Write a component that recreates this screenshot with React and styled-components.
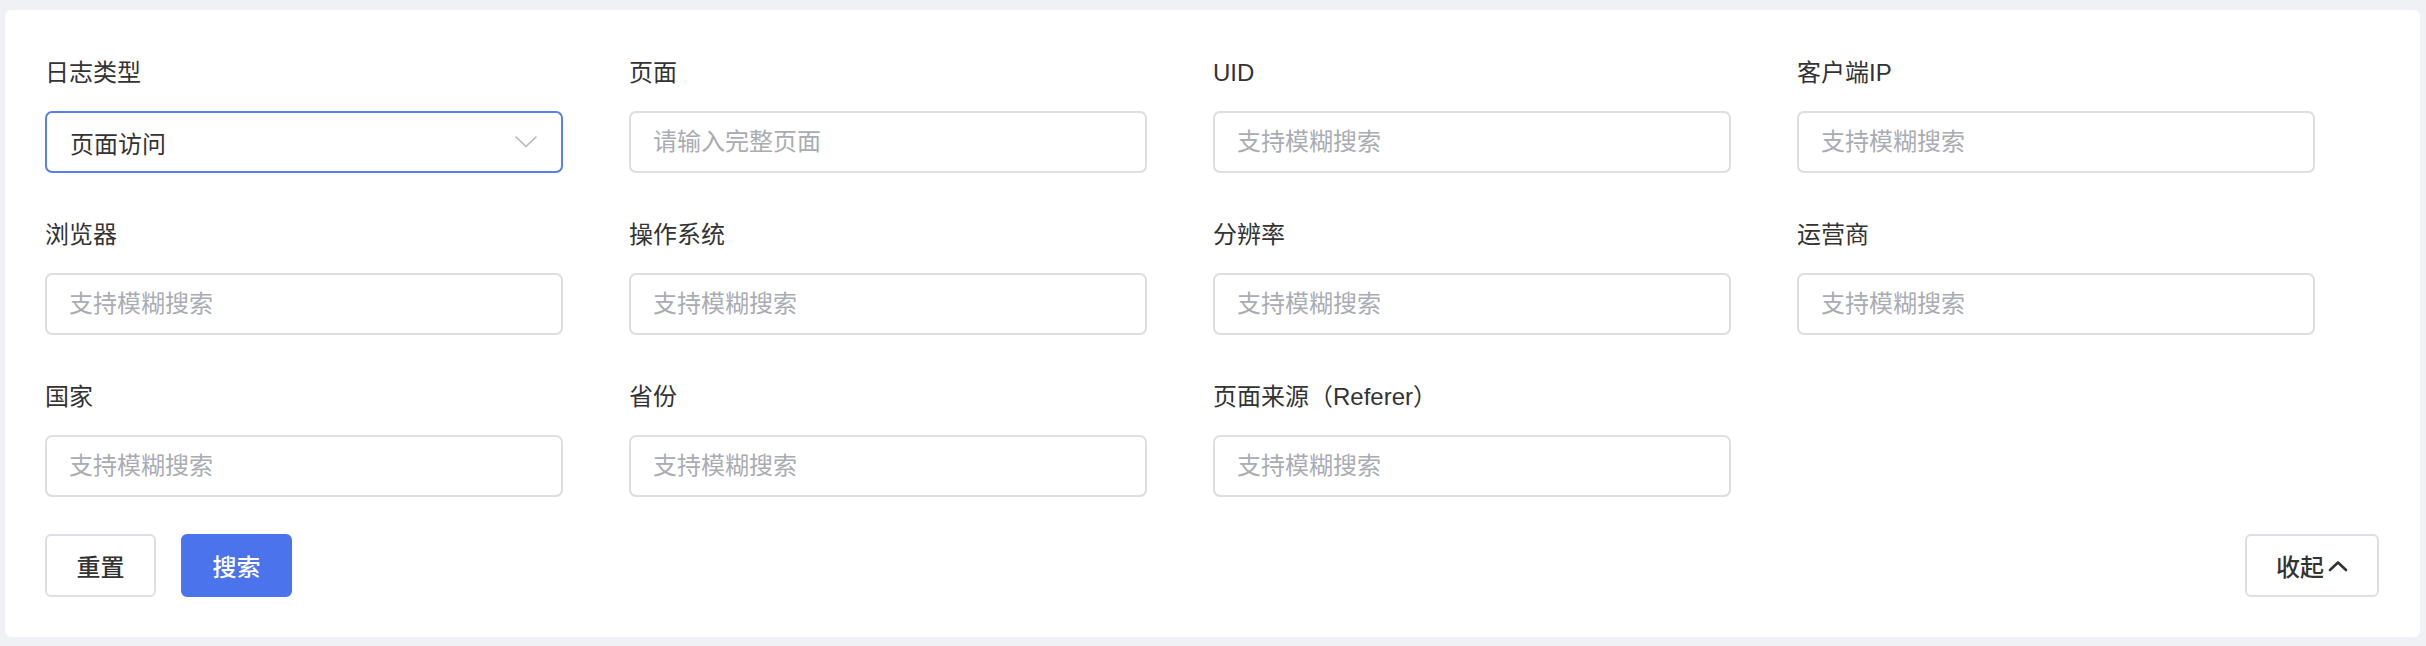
import React from "react";
import styled, { createGlobalStyle } from "styled-components";

const GlobalStyle = createGlobalStyle`
  html, body {
    margin: 0;
    padding: 0;
    background: #f0f1f5;
  }
  body {
    font-family: "Liberation Sans", "Noto Sans CJK SC", sans-serif;
    color: #333;
  }
  * {
    box-sizing: border-box;
  }
`;

const fields = [
  { label: "页面", placeholder: "请输入完整页面" },
  { label: "UID", placeholder: "支持模糊搜索" },
  { label: "客户端IP", placeholder: "支持模糊搜索" },
  { label: "浏览器", placeholder: "支持模糊搜索" },
  { label: "操作系统", placeholder: "支持模糊搜索" },
  { label: "分辨率", placeholder: "支持模糊搜索" },
  { label: "运营商", placeholder: "支持模糊搜索" },
  { label: "国家", placeholder: "支持模糊搜索" },
  { label: "省份", placeholder: "支持模糊搜索" },
  { label: "页面来源（Referer）", placeholder: "支持模糊搜索" },
];

function ChevronDown() {
  return (
    <svg width="22" height="12" viewBox="0 0 22 12" fill="none">
      <polyline
        points="1,1 11,10.5 21,1"
        stroke="#b4b6bb"
        strokeWidth="1.6"
        strokeLinecap="round"
        strokeLinejoin="round"
      />
    </svg>
  );
}

function ChevronUp() {
  return (
    <svg width="20" height="12" viewBox="0 0 20 12" fill="none">
      <polyline
        points="2,10 10,2.5 18,10"
        stroke="#333"
        strokeWidth="2.6"
        strokeLinecap="round"
        strokeLinejoin="round"
      />
    </svg>
  );
}

export default function App() {
  return (
    <Page>
      <GlobalStyle />
      <Card>
        <FieldGrid>
          <FormItem>
            <Label>日志类型</Label>
            <Select>
              <span>页面访问</span>
              <ChevronDown />
            </Select>
          </FormItem>
          {fields.map((f) => (
            <FormItem key={f.label}>
              <Label>{f.label}</Label>
              <Input placeholder={f.placeholder} />
            </FormItem>
          ))}
        </FieldGrid>
        <Actions>
          <ButtonGroup>
            <Button>重置</Button>
            <Button primary>搜索</Button>
          </ButtonGroup>
          <Button wide>
            收起
            <ChevronUp />
          </Button>
        </Actions>
      </Card>
    </Page>
  );
}

const Page = styled.div`
  padding: 10px 6px 9px 5px;
`;

const Card = styled.div`
  background: #fff;
  border-radius: 6px;
  padding: 47px 41px 40px 40px;
`;

const FieldGrid = styled.div`
  display: grid;
  grid-template-columns: repeat(4, 518px);
  column-gap: 66px;
  row-gap: 46px;
`;

const FormItem = styled.div`
  display: flex;
  flex-direction: column;
  gap: 22px;
`;

const Label = styled.div`
  font-size: 24px;
  line-height: 32px;
  color: #333;
  white-space: nowrap;
`;

const Select = styled.div`
  height: 62px;
  border: 2px solid #5b7fe9;
  border-radius: 7px;
  padding: 0 24px 0 23px;
  display: flex;
  align-items: center;
  justify-content: space-between;
  font-size: 24px;
  color: #333;
`;

const Input = styled.input`
  height: 62px;
  width: 100%;
  border: 2px solid #dddee1;
  border-radius: 7px;
  padding: 0 22px;
  font-family: inherit;
  font-size: 24px;
  color: #333;
  outline: none;
  background: #fff;

  &::placeholder {
    color: #a9acb2;
  }
`;

const Actions = styled.div`
  margin-top: 37px;
  display: flex;
  justify-content: space-between;
  align-items: center;
`;

const ButtonGroup = styled.div`
  display: flex;
  gap: 25px;
`;

const Button = styled.button`
  height: 63px;
  width: ${(p) => (p.wide ? "134px" : "111px")};
  border-radius: 6px;
  border: 2px solid ${(p) => (p.primary ? "#4b74ec" : "#dddee1")};
  background: ${(p) => (p.primary ? "#4b74ec" : "#fff")};
  color: ${(p) => (p.primary ? "#fff" : "#333")};
  font-family: inherit;
  font-size: 24px;
  font-weight: 500;
  display: flex;
  align-items: center;
  justify-content: center;
  gap: 4px;
  padding: 0;
  cursor: pointer;
`;
